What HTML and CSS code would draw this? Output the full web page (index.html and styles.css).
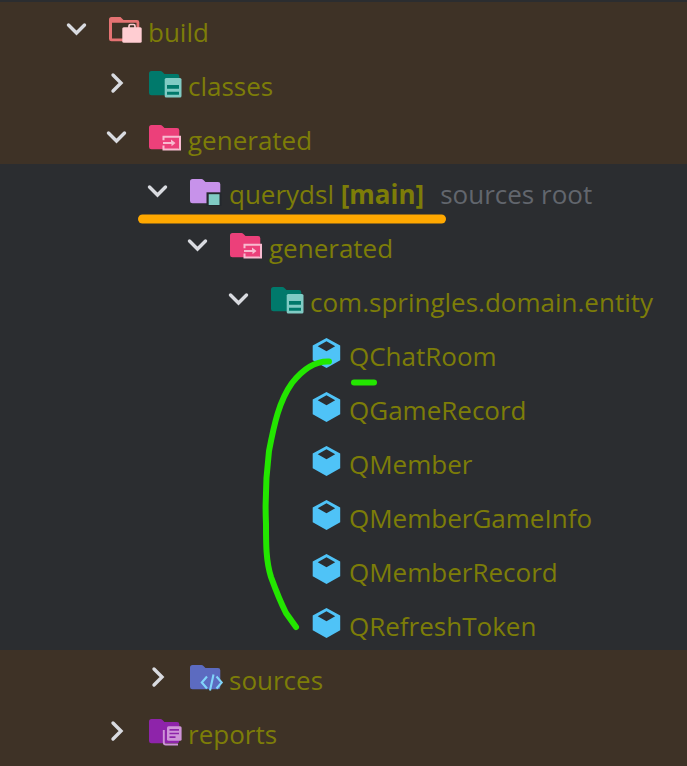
FILE: index.html
```
<!DOCTYPE html>
<html lang="en">
<head>
<meta charset="utf-8">
<meta name="viewport" content="width=device-width, initial-scale=1">
<title>Project tree</title>
<link rel="stylesheet" href="styles.css">
</head>
<body>
<svg class="defs" width="0" height="0" aria-hidden="true">
  <symbol id="down" viewBox="0 0 24 24"><path d="M3.500 8l8 8 8-8" fill="none" stroke="#d9dbe0" stroke-width="3.400" stroke-linecap="round"/></symbol>
  <symbol id="right" viewBox="0 0 24 24"><path d="M8 4l8 8-8 8" fill="none" stroke="#d9dbe0" stroke-width="3.400" stroke-linecap="round"/></symbol>
  <symbol id="folder" viewBox="0 0 34 30"><path d="M2.500 3H11.500Q12.500 3 13.200 3.700L15.500 6H28Q30.300 6 30.300 8.300V25Q30.300 27.300 28 27.300H2.500Q0 27.300 0 25V5.500Q0 3 2.500 3Z"/></symbol>
  <symbol id="build" viewBox="0 0 34 30">
    <path d="M2.500 3H11.500L14.500 6H28Q30.300 6 30.300 8.300V25Q30.300 27.300 28 27.300H2.500Q0 27.300 0 25V5.500Q0 3 2.500 3ZM3 8.800V24.500H27.500V8.800Z" fill="#e57373" fill-rule="evenodd"/>
    <path d="M20 14V12Q20 10.500 21.500 10.500H24.500Q26 10.500 26 12V14" fill="none" stroke="#ffcdd2" stroke-width="1.700"/>
    <rect x="13.300" y="13.300" width="19.400" height="15.500" rx="1.500" fill="#ffcdd2"/>
  </symbol>
  <symbol id="classes" viewBox="0 0 34 30">
    <use href="#folder" fill="#00796b"/>
    <rect x="15.700" y="10" width="16.800" height="19.400" rx="1.500" fill="#80cbc4"/>
    <path d="M18 17H30V20.800H18ZM18 23.800H30V26.800H18Z" fill="#00796b"/>
  </symbol>
  <symbol id="generated" viewBox="0 0 34 30">
    <use href="#folder" fill="#ec407a"/>
    <path d="M14.500 18.300V14.800H31V27.500H14.500V23.500" fill="none" stroke="#f8bbd0" stroke-width="2"/>
    <path d="M14 20H22V17.500L26.500 20.900L22.500 24.300V21.900H14Z" fill="#f8bbd0"/>
  </symbol>
  <symbol id="source-root" viewBox="0 0 34 30">
    <use href="#folder" fill="#c792ea"/>
    <path d="M16.500 16.300H31.500V30H16.500Z" fill="#24282d"/>
    <rect x="18.700" y="18.200" width="10.800" height="10.800" fill="#80cbc4"/>
  </symbol>
  <symbol id="sources" viewBox="0 0 34 30">
    <use href="#folder" fill="#5c6bc0"/>
    <path d="M17 14.500L11.800 20.500L17 26.500M26.500 14.500L31.700 20.500L26.500 26.500M23.500 12.500L20 28.500" fill="none" stroke="#81d4fa" stroke-width="2.100"/>
  </symbol>
  <symbol id="reports" viewBox="0 0 34 30">
    <use href="#folder" fill="#8e24aa"/>
    <path d="M14.800 14V26.500Q14.800 28.500 16.800 28.500H29" fill="none" stroke="#ce93d8" stroke-width="1.900"/>
    <rect x="18" y="10.200" width="14.600" height="14.600" rx="1.500" fill="#ce93d8"/>
    <path d="M20.500 13.900H30M20.500 17.500H30M20.500 21.100H26.500" stroke="#8e24aa" stroke-width="1.600"/>
  </symbol>
  <symbol id="cube" viewBox="0 0 34 30">
    <path d="M16.500 0L30.200 7.500V22.300L16.500 30L2.700 22.300V7.500ZM16.500 3.300L7.700 8.200L16.500 13.200L25.200 8.200Z" fill="#4fc3f7" fill-rule="evenodd"/>
  </symbol>
</svg>

<main class="panel">
  <ul class="tree">
    <li class="row excluded"><button class="toggle" aria-label="Collapse build"><svg><use href="#down"/></svg></button><svg class="icon"><use href="#build"/></svg><span class="label">build</span></li>
    <li class="row excluded level-1"><button class="toggle" aria-label="Expand classes"><svg><use href="#right"/></svg></button><svg class="icon"><use href="#classes"/></svg><span class="label">classes</span></li>
    <li class="row excluded level-1"><button class="toggle" aria-label="Collapse generated"><svg><use href="#down"/></svg></button><svg class="icon"><use href="#generated"/></svg><span class="label">generated</span></li>
    <li class="row level-2"><button class="toggle" aria-label="Collapse querydsl"><svg><use href="#down"/></svg></button><svg class="icon"><use href="#source-root"/></svg><span class="label">querydsl <b>[main]</b></span><span class="label hint">sources root</span></li>
    <li class="row level-3"><button class="toggle" aria-label="Collapse generated"><svg><use href="#down"/></svg></button><svg class="icon"><use href="#generated"/></svg><span class="label">generated</span></li>
    <li class="row level-4"><button class="toggle" aria-label="Collapse package"><svg><use href="#down"/></svg></button><svg class="icon"><use href="#classes"/></svg><span class="label">com.springles.domain.entity</span></li>
    <li class="row leaf"><svg class="icon"><use href="#cube"/></svg><span class="label">QChatRoom</span></li>
    <li class="row leaf"><svg class="icon"><use href="#cube"/></svg><span class="label">QGameRecord</span></li>
    <li class="row leaf"><svg class="icon"><use href="#cube"/></svg><span class="label">QMember</span></li>
    <li class="row leaf"><svg class="icon"><use href="#cube"/></svg><span class="label">QMemberGameInfo</span></li>
    <li class="row leaf"><svg class="icon"><use href="#cube"/></svg><span class="label">QMemberRecord</span></li>
    <li class="row leaf"><svg class="icon"><use href="#cube"/></svg><span class="label">QRefreshToken</span></li>
    <li class="row excluded level-2"><button class="toggle" aria-label="Expand sources"><svg><use href="#right"/></svg></button><svg class="icon"><use href="#sources"/></svg><span class="label">sources</span></li>
    <li class="row excluded level-1"><button class="toggle" aria-label="Expand reports"><svg><use href="#right"/></svg></button><svg class="icon"><use href="#reports"/></svg><span class="label">reports</span></li>
  </ul>
  <svg class="marks" viewBox="0 0 687 766" width="687" height="766" fill="none" stroke-linecap="round" stroke-linejoin="round" aria-hidden="true">
    <path d="M142.500 219H441.500" stroke="#ffa800" stroke-width="9"/>
    <path d="M354 382.500H374" stroke="#23e600" stroke-width="6"/>
    <path d="M329 361.500C316 361 303 369 292 383C279 401 274 425 269 451C266 475 265 500 266 524C266 545 266 561 271 577C275 588 280 601 286 613L296 627" stroke="#23e600" stroke-width="6"/>
  </svg>
</main>
</body>
</html>
```
FILE: styles.css
```
* {
  box-sizing: border-box;
}

body {
  margin: 0;
  background: #3e3226;
  color: #7d7d08;
  font-family: "Open Sans", "Noto Sans", sans-serif;
  font-size: 26px;
  line-height: 36px;
}

.defs {
  position: absolute;
}

.panel {
  position: relative;
  border-top: 2px solid #2b2d30;
}

.tree {
  margin: 0;
  padding: 0;
  list-style: none;
}

.row {
  display: flex;
  align-items: center;
  height: 54px;
  padding-left: 65px;
  background: #2b2d30;
  white-space: nowrap;
}

.excluded {
  background: #3e3226;
}

.level-1 {
  padding-left: 105px;
}

.level-2 {
  padding-left: 146px;
}

.level-3 {
  padding-left: 186px;
}

.level-4 {
  padding-left: 227px;
}

.leaf {
  padding-left: 310px;
}

.toggle {
  width: 24px;
  height: 24px;
  margin: 0 20px 0 0;
  padding: 0;
  border: 0;
  background: none;
  cursor: pointer;
}

.toggle svg {
  display: block;
  width: 24px;
  height: 24px;
}

.icon {
  flex: none;
  width: 34px;
  height: 30px;
  margin-right: 5px;
}

.label {
  padding-top: 6px;
}

.hint {
  margin-left: 16px;
  color: #62666d;
}

.marks {
  position: absolute;
  top: -2px;
  left: 0;
  pointer-events: none;
}
```
